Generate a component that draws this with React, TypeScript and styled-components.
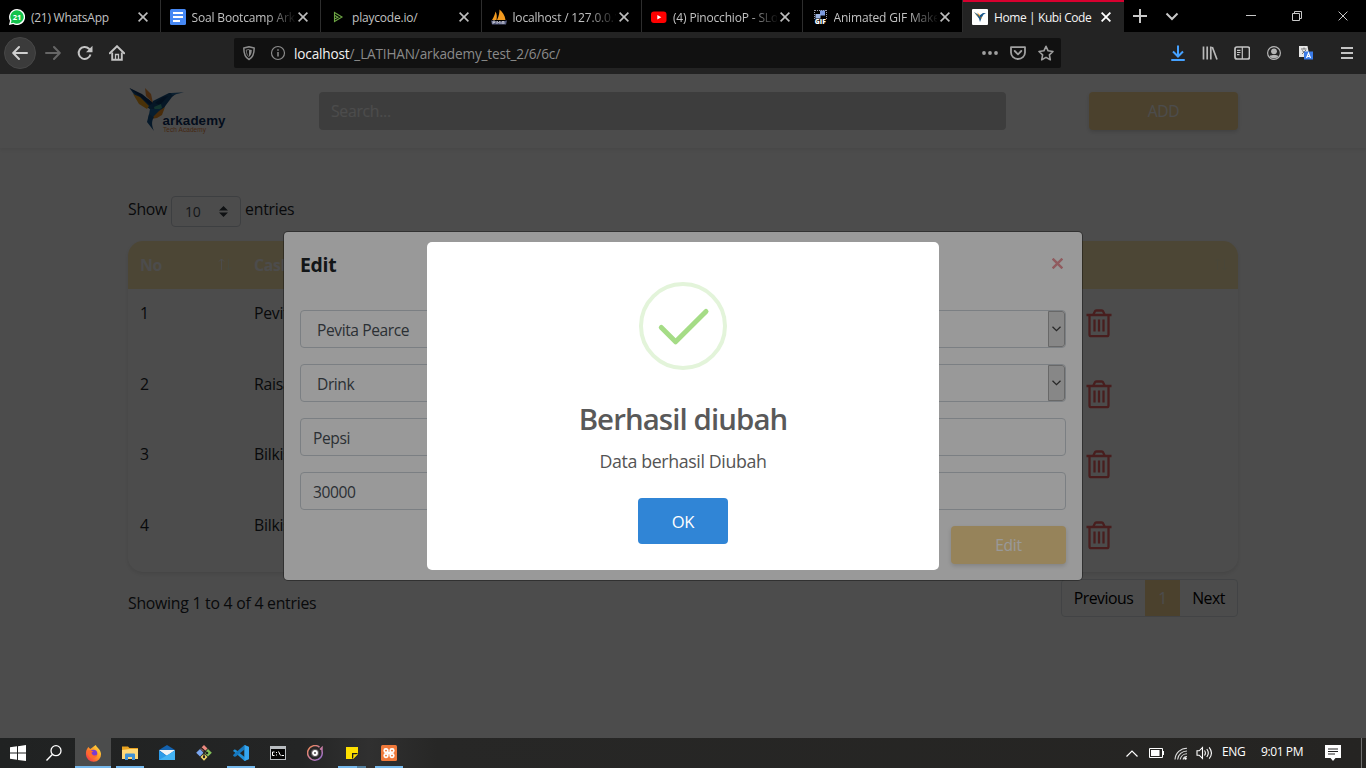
import React from 'react';
import styled, { createGlobalStyle } from 'styled-components';

const Global = createGlobalStyle`
  *, *::before, *::after { box-sizing: border-box; }
  html, body { margin: 0; padding: 0; overflow: hidden; background: #4c4c4c; }
  body { font-family: "Open Sans", "Noto Sans", sans-serif; color: #212529; }
  svg { display: block; flex: none; }
  button { font-family: inherit; margin: 0; padding: 0; border: 0; }
`;

const Desktop = styled.div`
  width: 1366px;
  height: 768px;
  display: flex;
  flex-direction: column;
  overflow: hidden;
`;

/* ---------- browser chrome ---------- */

const TabBar = styled.div`
  height: 32px;
  flex: none;
  display: flex;
  background: #000;
`;

const Tab = styled.div<{ $active?: boolean }>`
  width: 160.5px;
  height: 32px;
  flex: none;
  display: flex;
  align-items: center;
  padding: 2px ${p => (p.$active ? 13 : 12)}px 0 9px;
  background: ${p => (p.$active ? '#232323' : '#000')};
  color: ${p => (p.$active ? '#f5f5f5' : '#c2c2c2')};
  border-right: ${p => (p.$active ? '0' : '1px solid #2d2d2d')};
  box-shadow: ${p => (p.$active ? 'inset 0 2px 0 #d7002f' : 'none')};
`;

const TabTitle = styled.span<{ $fade?: boolean; $ls?: number }>`
  flex: 1;
  min-width: 0;
  margin: 0 3px 0 6px;
  padding-top: 2px;
  overflow: hidden;
  white-space: nowrap;
  font-size: 12px;
  line-height: 18px;
  letter-spacing: ${p => p.$ls ?? -0.2}px;
  ${p => p.$fade && 'mask-image: linear-gradient(to right, #000 72%, transparent 102%);'}
`;

const TabActions = styled.div`
  display: flex;
  align-items: center;
  gap: 16px;
  padding-left: 8px;
  flex: 1;
`;

const WindowControls = styled.div`
  display: flex;
  align-items: center;
`;

const WindowButton = styled.div`
  width: 46px;
  height: 32px;
  display: flex;
  align-items: center;
  justify-content: center;
`;

const NavBar = styled.div`
  height: 42px;
  flex: none;
  display: flex;
  align-items: center;
  background: #232323;
  padding: 0 13px 0 4px;
`;

const NavButtons = styled.div`
  display: flex;
  align-items: center;
  width: 230px;
`;

const NavButton = styled.div<{ $round?: boolean }>`
  width: 32px;
  height: 32px;
  margin-right: ${p => (p.$round ? '1px' : '0')};
  border-radius: 50%;
  display: flex;
  align-items: center;
  justify-content: center;
  background: ${p => (p.$round ? '#3b3b3b' : 'transparent')};
  border: ${p => (p.$round ? '1px solid #474747' : '0')};
`;

const UrlBar = styled.div`
  width: 827px;
  height: 30px;
  display: flex;
  align-items: center;
  padding: 0 7px 0 7px;
  background: #111;
  border-radius: 2px;
`;

const UrlText = styled.div`
  flex: 1;
  margin-left: 8px;
  padding-top: 2px;
  font-size: 13.6px;
  letter-spacing: -0.16px;
  line-height: 20px;
  color: #8a8a8a;
  white-space: nowrap;
  b { font-weight: 400; color: #f2f2f2; }
`;

const UrlIcons = styled.div<{ $gap?: number }>`
  display: flex;
  gap: ${p => p.$gap ?? 12}px;
`;

const Tools = styled.div`
  flex: 1;
  display: flex;
  align-items: center;
  justify-content: flex-end;
  gap: 16px;
`;

const MenuIcon = styled.div`
  margin-left: 11px;
`;

/* ---------- page ---------- */

const Viewport = styled.div`
  flex: 1;
  min-height: 0;
  position: relative;
  overflow: hidden;
  background: #fff;
`;

const Backdrop = styled.div<{ $dim: number }>`
  position: absolute;
  inset: 0;
  display: flex;
  align-items: center;
  justify-content: center;
  background: rgba(0, 0, 0, ${p => p.$dim});
`;

const Header = styled.header`
  height: 74px;
  display: flex;
  align-items: center;
  padding: 0 128px;
  background: #fff;
  box-shadow: 0 2px 4px rgba(0, 0, 0, 0.075);
`;

const Brand = styled.div`
  width: 191px;
  margin-top: -2px;
`;

const SearchInput = styled.div`
  width: 687px;
  height: 38px;
  padding: 0 12px;
  border-radius: 4px;
  background: #cecece;
  color: #fff;
  font-size: 15.8px;
  letter-spacing: -0.3px;
  line-height: 38px;
`;

const PrimaryButton = styled.button<{ $w: number }>`
  width: ${p => p.$w}px;
  height: 38px;
  border-radius: 4px;
  background: #fbda97;
  color: #fff;
  font-size: 15.6px;
  letter-spacing: -0.3px;
  line-height: 39px;
  box-shadow: 0 2px 4px rgba(0, 0, 0, 0.15);
`;

const HeaderAction = styled.div`
  margin-left: auto;
`;

const Content = styled.main`
  padding: 48px 128px 0;
  font-size: 15.8px;
  letter-spacing: -0.25px;
`;

const LengthRow = styled.div`
  height: 31px;
  display: flex;
  align-items: center;
  gap: 4px;
  line-height: 24px;
  span { margin-top: -5px; }
`;

const LengthSelect = styled.div`
  width: 70px;
  height: 31px;
  display: flex;
  align-items: center;
  justify-content: space-between;
  padding: 0 12px 0 13px;
  border: 1px solid #ced4da;
  border-radius: 4px;
  font-size: 14px;
  color: #495057;
`;

const Table = styled.div`
  height: 331px;
  margin: 14px 0 7px;
  border-radius: 15px;
  overflow: hidden;
  box-shadow: 0 2px 4px rgba(0, 0, 0, 0.1);
`;

const TableRow = styled.div`
  height: 70.5px;
  display: grid;
  grid-template-columns: 114px 1fr 164px;
`;

const TableHead = styled(TableRow)`
  height: 48px;
  background: #feeab2;
  color: #fff;
  font-weight: 700;
`;

const Cell = styled.div<{ $end?: boolean }>`
  display: flex;
  align-items: flex-start;
  justify-content: ${p => (p.$end ? 'flex-end' : 'space-between')};
  padding: 12px 10px 12px 12px;
  line-height: 24px;
`;

const TrashCell = styled.div`
  padding: 20px 0 0 12px;
`;

const SortMark = styled.svg`
  margin-top: 5px;
`;

const TableFooter = styled.div`
  display: flex;
  justify-content: space-between;
  align-items: flex-start;
`;

const Info = styled.div`
  padding-top: 12px;
  line-height: 24px;
`;

const Pagination = styled.div`
  display: flex;
  height: 38px;
  border: 1px solid #dee2e6;
  border-radius: 4px;
  overflow: hidden;
  color: #000;
`;

const PageItem = styled.div<{ $w: number; $active?: boolean }>`
  width: ${p => p.$w}px;
  margin: -1px 0;
  line-height: 38px;
  text-align: center;
  letter-spacing: -0.5px;
  background: ${p => (p.$active ? '#fbda97' : 'transparent')};
  color: ${p => (p.$active ? '#fff' : 'inherit')};
`;

/* ---------- edit dialog ---------- */

const EditDialog = styled.div`
  width: 798px;
  height: 348px;
  padding: 16px;
  display: flex;
  flex-direction: column;
  background: #fff;
  border-radius: 4px;
  box-shadow: 0 0 0 1px rgba(0, 0, 0, 0.35);
`;

const DialogHead = styled.div`
  height: 62px;
  display: flex;
  justify-content: space-between;
  padding: 2px 3px 0 0;
`;

const DialogTitle = styled.h5`
  margin: 0;
  font-size: 19.4px;
  font-weight: 700;
  line-height: 30px;
  letter-spacing: -0.3px;
`;

const DialogClose = styled.div`
  padding-top: 8px;
`;

const Field = styled.div<{ $inset?: boolean }>`
  height: 38px;
  flex: none;
  margin-bottom: 16px;
  display: flex;
  align-items: center;
  justify-content: space-between;
  padding-left: ${p => (p.$inset ? 16 : 12)}px;
  border: 1px solid #ced4da;
  border-radius: 4px;
  overflow: hidden;
  color: #495057;
  font-size: 15.6px;
  letter-spacing: -0.42px;
  line-height: 24px;
  span { padding-top: 1px; }
`;

const Dropper = styled.div`
  width: 17px;
  height: 36px;
  display: flex;
  align-items: center;
  justify-content: center;
  background: #e1e1e1;
  border: 1px solid #adadad;
  border-radius: 0 3px 3px 0;
`;

const DialogFoot = styled.div`
  display: flex;
  justify-content: flex-end;
`;

/* ---------- success alert ---------- */

const Alert = styled.div`
  width: 512px;
  height: 328px;
  padding-top: 40px;
  display: flex;
  flex-direction: column;
  align-items: center;
  background: #fff;
  border-radius: 5px;
`;

const AlertTitle = styled.h2`
  margin: 28px 0 0;
  font-size: 29.4px;
  font-weight: 600;
  line-height: 42px;
  letter-spacing: -0.9px;
  color: #595959;
`;

const AlertText = styled.div`
  margin-top: 8px;
  font-size: 17.8px;
  line-height: 26px;
  letter-spacing: -0.38px;
  color: #545454;
`;

const AlertButton = styled.button`
  width: 90px;
  height: 46px;
  margin-top: 24px;
  border-radius: 4px;
  background: #3085d6;
  color: #fff;
  font-size: 16.6px;
  letter-spacing: -0.3px;
  line-height: 48px;
`;

/* ---------- taskbar ---------- */

const Taskbar = styled.div`
  height: 30px;
  flex: none;
  display: flex;
  justify-content: space-between;
  background: linear-gradient(90deg, #202222 0, #242525 22%, #303030 27%, #272726 32%, #252422 100%);
`;

const TaskGroup = styled.div`
  display: flex;
`;

const Task = styled.div<{ $mark?: 'wide' | 'normal' | 'double'; $gap?: number }>`
  width: 36px;
  height: 30px;
  margin-right: ${p => p.$gap ?? 1}px;
  display: flex;
  align-items: center;
  justify-content: center;
  background: ${p =>
    p.$mark === 'wide'
      ? 'linear-gradient(#76b9ed, #76b9ed) 0 100% / 100% 2px no-repeat, #4b4c4c'
      : p.$mark === 'normal'
      ? 'linear-gradient(#76b9ed, #76b9ed) 50% 100% / 28px 2px no-repeat'
      : p.$mark === 'double'
      ? 'linear-gradient(90deg, #76b9ed 19px, #54809f 19px) 50% 100% / 28px 2px no-repeat'
      : 'transparent'};
`;

const Tray = styled.div`
  display: flex;
  align-items: center;
  color: #fff;
`;

const TrayItem = styled.div<{ $ml: number }>`
  margin-left: ${p => p.$ml}px;
`;

const TrayText = styled.span<{ $w: number; $ml: number }>`
  width: ${p => p.$w}px;
  margin: -2px 0 0 ${p => p.$ml}px;
  white-space: nowrap;
  font-size: 12px;
  line-height: 18px;
  letter-spacing: -0.4px;
`;

const ShowDesktop = styled.div`
  width: 5px;
  height: 30px;
  margin-left: 20px;
  border-left: 1px solid #6f6f6f;
`;

/* ---------- drawings ---------- */

const Cross = ({ s = 10, c = '#bdbdbd', w = 1.6 }: { s?: number; c?: string; w?: number }) => (
  <svg width={s} height={s} viewBox="0 0 10 10" stroke={c} strokeWidth={w} fill="none">
    <path d="M.6 .6 9.4 9.4M9.4 .6 .6 9.4" />
  </svg>
);

const Sixteen = ({ children, size = 16 }: { children: React.ReactNode; size?: number }) => (
  <svg width={size} height={size} viewBox="0 0 16 16" fill="none">
    {children}
  </svg>
);

const WhatsAppIcon = () => (
  <Sixteen>
    <path d="M8 0a8 8 0 1 1-3.800 15L0 16l1-4.200A8 8 0 0 1 8 0Z" fill="#fff" />
    <path d="M8 1.300a6.700 6.700 0 1 1-3.500 12.400L1.800 14.300l.7-2.600A6.700 6.700 0 0 1 8 1.300Z" fill="#12c24b" />
    <text x="8" y="10.700" textAnchor="middle" fontSize="7.500" fontWeight="700" fill="#fff" fontFamily="Open Sans, sans-serif">21</text>
  </Sixteen>
);

const DocsIcon = () => (
  <Sixteen>
    <rect width="16" height="16" rx="1.500" fill="#4688f4" />
    <path d="M3 4h10M3 8h10M3 12h7" stroke="#fff" strokeWidth="2" />
  </Sixteen>
);

const PlayIcon = () => (
  <Sixteen>
    <path d="M4.500 3.500v9l7.500-4.500zM4.500 6.200 8 8.300 4.500 10" stroke="#6da544" strokeWidth="1.100" />
  </Sixteen>
);

const PmaIcon = () => (
  <Sixteen>
    <path d="M1 11C3 8 4 5 4.500 2.500 6 5 6 8 5.500 11ZM6 11C8 7 8.500 3 8.500.500c3 2.500 5.500 6 6 10.500Z" fill="#f29a1f" />
    <path d="M0 11.500c5 1.500 11 1.500 16 0l-1 4H1z" fill="#565c80" />
    <path d="M2 15v-3h2v1.500H2M6 15v-3l1.500 2L9 12v3M11 15v-2.500h2V15M11 14h2" stroke="#c9cad6" strokeWidth=".8" />
  </Sixteen>
);

const YouTubeIcon = () => (
  <Sixteen>
    <rect x="0" y="2.500" width="15.500" height="11.500" rx="3" fill="#f00" />
    <path d="M6.300 6v4.500l4-2.200z" fill="#fff" />
  </Sixteen>
);

const GifIcon = () => (
  <Sixteen>
    <path d="M3 1.500h11M2.500 1v9M14.500 1v9" stroke="#99a" strokeDasharray="1 1" />
    <rect x="8" y="1.500" width="5" height="5" fill="#7d9be0" />
    <rect x="3.500" y="5" width="5" height="4.500" fill="#9db4e2" />
    <text x="8.300" y="15.200" textAnchor="middle" fontSize="6.800" fontWeight="800" fill="#fff" fontFamily="Open Sans, sans-serif">GIF</text>
  </Sixteen>
);

const KubiIcon = () => (
  <Sixteen>
    <rect width="16" height="16" rx="1" fill="#fff" />
    <path d="M2 3l5.500 3.500L11 4l3 .2-2.500 1.300L9.500 9 8 13l-1-3.500z" fill="#17568a" />
    <path d="M5 3.200 8 6l-.5 2z M8.500 8.500l1.500-1-1 2.500z" fill="#f3961e" />
    <path d="m2 3 4.500 5L5 7z" fill="#e8a935" />
  </Sixteen>
);

const BackIcon = ({ c, flip }: { c: string; flip?: boolean }) => (
  <svg width="16" height="16" viewBox="0 0 16 16" fill="none" stroke={c} strokeWidth="2" strokeLinecap="round" strokeLinejoin="round" transform={flip ? 'scale(-1 1)' : undefined}>
    <path d="M15 8H1.500M7 2 1.200 8 7 14" />
  </svg>
);

const ReloadIcon = () => (
  <Sixteen>
    <path d="M13.500 9.500A6 6 0 1 1 12 3.700L13.500 5" stroke="#c4c4c4" strokeWidth="2" />
    <path d="M15.500.800V7.200H9z" fill="#c4c4c4" />
  </Sixteen>
);

const HomeIcon = () => (
  <Sixteen>
    <path d="M.8 8.300 8 1.200l7.200 7.100" stroke="#c4c4c4" strokeWidth="1.900" strokeLinecap="round" />
    <path d="M3.200 7.500v7.300h9.600V7.500" stroke="#c4c4c4" strokeWidth="1.900" />
    <path d="M6.500 15V9.500h3V15" stroke="#c4c4c4" strokeWidth="1.300" />
  </Sixteen>
);

const ShieldIcon = () => (
  <Sixteen>
    <path d="M8 1.800 13.200 3c0 6-1.200 9.500-5.200 11.500C4 12.500 2.800 9 2.800 3z" stroke="#8c8c8c" strokeWidth="1.500" strokeLinejoin="round" />
    <path d="M8 4.500v7.300c2-1.500 2.700-3.300 2.800-6.700z" fill="#8c8c8c" />
    <path d="M8 4.500 5.300 5c.1 3.400.8 5.200 2.700 6.800" stroke="#8c8c8c" strokeWidth=".8" />
  </Sixteen>
);

const InfoIcon = () => (
  <Sixteen>
    <circle cx="8" cy="8" r="6.500" stroke="#8c8c8c" strokeWidth="1.200" />
    <path d="M8 7v4.500M8 4.300v1.500" stroke="#8c8c8c" strokeWidth="1.500" />
  </Sixteen>
);

const DotsIcon = () => (
  <Sixteen>
    <g fill="#a0a0a0">
      <circle cx="2" cy="8" r="1.900" />
      <circle cx="8" cy="8" r="1.900" />
      <circle cx="14" cy="8" r="1.900" />
    </g>
  </Sixteen>
);

const PocketIcon = () => (
  <Sixteen>
    <path d="M1 2.200h14V7.500a7 6.500 0 0 1-14 0z" stroke="#a0a0a0" strokeWidth="1.800" strokeLinejoin="round" />
    <path d="M4.700 6 8 9.300 11.300 6" stroke="#a0a0a0" strokeWidth="1.800" strokeLinecap="round" strokeLinejoin="round" />
  </Sixteen>
);

const StarIcon = () => (
  <Sixteen>
    <path d="m8 1.300 2.100 4.500 4.900.7-3.600 3.400.9 4.900L8 12.400l-4.300 2.400.9-4.900L1 6.500l4.900-.7z" stroke="#a0a0a0" strokeWidth="1.600" strokeLinejoin="round" />
  </Sixteen>
);

const DownloadIcon = () => (
  <Sixteen>
    <path d="M8 .5v10.500M3 6.500l5 5 5-5" stroke="#45a1ff" strokeWidth="2" />
    <path d="M2 15h12" stroke="#45a1ff" strokeWidth="2" strokeLinecap="round" />
  </Sixteen>
);

const LibraryIcon = () => (
  <Sixteen>
    <path d="M1.500 1.500v13M5.200 1.500v13M8.800 1.500v13M10.300 2l4.700 12.500" stroke="#b8b8b8" strokeWidth="1.700" />
  </Sixteen>
);

const SidebarIcon = () => (
  <Sixteen>
    <rect x="1" y="2" width="14.500" height="12" rx="2" stroke="#c4c4c4" strokeWidth="1.700" />
    <path d="M8.300 2v12M3 5.300h3.500M3 7.500h3.500M3 9.700h2.500" stroke="#c4c4c4" strokeWidth="1.200" />
  </Sixteen>
);

const AccountIcon = () => (
  <Sixteen>
    <circle cx="8" cy="8" r="6.400" stroke="#b4b4b4" strokeWidth="1.200" />
    <circle cx="8" cy="6.300" r="2.900" fill="#b4b4b4" />
    <path d="M3.500 11c1-1.500 8-1.500 9 0-1.500 3-7.500 3-9 0Z" fill="#b4b4b4" />
  </Sixteen>
);

const TranslateIcon = () => (
  <Sixteen>
    <path d="M1 1h8.500l2 11H1z" fill="#e6e6e6" />
    <path d="M3 4h5.500M6 2.500V4M4 5.500l4 3M8 5l-4 4" stroke="#666" strokeWidth=".9" />
    <rect x="6" y="6.500" width="9" height="8" fill="#3a7be8" />
    <path d="m8.500 13 2-5 2 5M9.200 11.500h2.700" stroke="#fff" strokeWidth="1.100" />
  </Sixteen>
);

const HamburgerIcon = () => (
  <svg width="12" height="12" viewBox="0 0 12 12" stroke="#c4c4c4" strokeWidth="2">
    <path d="M0 1h12M0 6h12M0 11h12" />
  </svg>
);

const ArkademyLogo = () => (
  <svg width="100" height="48" viewBox="0 0 100 48">
    <path d="M1.500 2 10 14l13 10 5-6z" fill="#145089" />
    <path d="M1.500 2 14 8l11 9-3 2z" fill="#0d3566" />
    <path d="M5 8 12 11l9 9-2 3-8-5z" fill="#f5a61d" />
    <path d="m17 2 6 6 2 9-7-7z" fill="#f0913a" />
    <path d="m25 15 8-4 8-4 8 0-5 4-6 8-4 6-11 5z" fill="#154e80" />
    <path d="m27 17 8-6 5-1-8 9z" fill="#0c3765" />
    <path d="m26 21 7-3 1 4-7 3z" fill="#3fae9b" />
    <path d="m43 7 13-.8-12 3z" fill="#2d6fa5" />
    <path d="m22 23 12 0-8 8-6 3z" fill="#1b66a3" />
    <path d="m37 21-3 8-5 3-6 1 8-8z" fill="#f39322" />
    <path d="m21 28-2 8 7 9c-2-5-3-9 0-14z" fill="#15568e" />
    <text x="34.500" y="38.500" fontFamily="Liberation Sans, sans-serif" fontSize="13.300" fontWeight="700" textLength="63" fill="#0c3063">arkademy</text>
    <text x="35" y="46" fontFamily="Liberation Sans, sans-serif" fontSize="6.500" textLength="43" fill="#e8833a">Tech Academy</text>
  </svg>
);

const SortIcon = ({ up, down }: { up: string; down: string }) => (
  <SortMark width="14" height="13" viewBox="0 0 14 13" fill="none">
    <path d="M3.500 12V1M1 3.500 3.500 1 6 3.500" stroke={up} />
    <path d="M10.500 1v11M8 9.500l2.500 2.500L13 9.500" stroke={down} />
  </SortMark>
);

const TrashIcon = () => (
  <svg width="26" height="29" viewBox="0 0 26 29" fill="none" stroke="#f06464" strokeWidth="2.300" strokeLinejoin="round">
    <path d="M.5 6h25" />
    <path d="M7.500 5.500 8.800 2.500q.4-1 1.500-1h5.400q1.100 0 1.500 1L18.500 5.500" />
    <path d="M3.500 6v19.500q0 1.700 1.700 1.700h15.600q1.700 0 1.700-1.700V6" />
    <path d="M8.500 10.500v12M13 10.500v12M17.500 10.500v12" />
  </svg>
);

const SelectArrows = () => (
  <svg width="9" height="11" viewBox="0 0 9 11" fill="#343a40">
    <path d="M4.500 0 9 4.400H0zM4.500 11 0 6.400h9z" />
  </svg>
);

const SmallChevron = () => (
  <svg width="9" height="6" viewBox="0 0 9 6" fill="none" stroke="#444" strokeWidth="1.300">
    <path d="m.5.700 4 4 4-4" />
  </svg>
);

const SuccessIcon = () => (
  <svg width="88" height="88" viewBox="0 0 88 88" fill="none">
    <circle cx="44" cy="44" r="42" stroke="#e3f4da" strokeWidth="4" />
    <path d="M22.300 45.500 36.600 59.800 67 29.500" stroke="#a5dc86" strokeWidth="5" strokeLinecap="round" strokeLinejoin="round" />
  </svg>
);

const StartIcon = () => (
  <Sixteen>
    <path d="M0 2.300 7 1.300V7.600H0zM8 1.200 16 0v7.600H8zM0 8.500h7v6.300L0 13.800zM8 8.500h8V16l-8-1.100z" fill="#fff" />
  </Sixteen>
);

const SearchIcon = () => (
  <Sixteen>
    <circle cx="10" cy="5.700" r="5" stroke="#fff" strokeWidth="1.300" />
    <path d="M6.300 9.500.500 15.500" stroke="#fff" strokeWidth="1.400" />
  </Sixteen>
);

const FirefoxIcon = () => (
  <svg width="17" height="17" viewBox="0 0 18 18">
    <defs>
      <linearGradient id="fox" x1="1" y1="0" x2="0" y2="1">
        <stop offset="0" stopColor="#fff04a" />
        <stop offset=".45" stopColor="#ff9a26" />
        <stop offset="1" stopColor="#f2204f" />
      </linearGradient>
    </defs>
    <path d="M2 4.500 3.500 2l2 2.200C8 3 9 1.500 11.500 0c.5 2.500 5 4 5.500 9.500A8 8 0 0 1 1 10C1 7.500 1.200 6 2 4.500Z" fill="url(#fox)" />
    <circle cx="9" cy="9" r="4" fill="#7b3bd0" />
    <path d="M2.500 6c3-1 4 .5 6.500.5L7 8c0 3 3 4 6 2-1 5-8 5-10 0z" fill="#ff6b2b" />
  </svg>
);

const FolderIcon = () => (
  <Sixteen>
    <path d="M0 1.500h6l1.500 1.500H16v11H0z" fill="#e9a320" />
    <path d="M0 5 8 4h8v10H0z" fill="#ffd978" />
    <path d="M3 15V9.500q0-1 1-1h8q1 0 1 1V15h-3v-3H6v3z" fill="#3f92d6" />
  </Sixteen>
);

const MailIcon = () => (
  <Sixteen>
    <path d="M0 5 8 0l8 5v10H0z" fill="#1462ae" />
    <path d="M0 5h16L8 11z" fill="#f2f4f6" />
    <path d="M0 5.500 8 11l8-5.500V15H0z" fill="#2c9be8" />
    <path d="M0 15 16 5.500V15z" fill="#43b3f4" />
  </Sixteen>
);

const GitIcon = () => (
  <Sixteen>
    <path d="m8 0 3.500 3.500L8 7 4.500 3.500z" fill="#ee8a80" />
    <path d="M4 4 7.500 7.700 4 11.500.2 7.700z" fill="#7ba7f0" />
    <path d="m12 4 3.800 3.800L12 11.500 8.500 7.700z" fill="#83c15a" />
    <path d="m8 8.500 3.500 3.500L8 15.800 4.500 12z" fill="#f3d66b" />
    <path d="m5 2.500 6.500 6M8 6v6" stroke="#222" strokeWidth="1.200" />
    <circle cx="11" cy="8" r="1.300" fill="#222" />
    <circle cx="8" cy="12" r="1.200" fill="#222" />
  </Sixteen>
);

const CodeIcon = () => (
  <Sixteen>
    <path d="M11.500 0 16 2v12l-4.500 2-9.800-8.800L0 6l1.200-1.500 1.500.2L11.500 12V4z" fill="#1f8fd6" />
    <path d="m0 10.500 1.300 1.200 1.500-.2L11.500 4.500V0L1 9z" fill="#1677bd" />
    <path d="M11.500 0 16 2v12l-4.500 2z" fill="#35a5ef" />
  </Sixteen>
);

const CmdIcon = () => (
  <svg width="16" height="14" viewBox="0 0 16 14">
    <path d="M0 0h16v14H0z" fill="#b8bcc0" />
    <path d="M1 3h14v10H1z" fill="#050505" />
    <path d="M4.500 6H2.500v3.500h2M6.500 6v1M6.500 8.500v1M8.500 5.500l2 4M11.500 9.500h2.500" stroke="#fff" fill="none" />
  </svg>
);

const GrooveIcon = () => (
  <Sixteen>
    <defs>
      <linearGradient id="groove" x1="0" y1="0" x2="1" y2="1">
        <stop offset="0" stopColor="#f28a50" />
        <stop offset=".5" stopColor="#cc7d9c" />
        <stop offset="1" stopColor="#8a6ad0" />
      </linearGradient>
    </defs>
    <path d="M12.500 2.200A7.300 7.300 0 1 0 15 6V2.500L13 4.500" stroke="url(#groove)" strokeWidth="1.500" />
    <circle cx="8" cy="8" r="4" fill="#63595e" />
    <circle cx="8" cy="8" r="2" stroke="#fff" strokeWidth="1.800" />
  </Sixteen>
);

const NotesIcon = () => (
  <svg width="12" height="12" viewBox="0 0 12 12">
    <path d="M0 0h12v7L7 12H0z" fill="#ffe000" />
    <path d="M6 6h6L6 12z" fill="#1c1c1c" />
    <path d="M7.300 11.700V7.300h4.400z" fill="#ffe000" />
  </svg>
);

const XamppIcon = () => (
  <Sixteen>
    <rect width="16" height="16" rx="1.500" fill="#f0793a" />
    <g stroke="#fff" strokeWidth="1.700">
      <rect x="3.200" y="3.800" width="3.600" height="3.600" rx="1.600" />
      <rect x="9.200" y="3.800" width="3.600" height="3.600" rx="1.600" />
      <rect x="3.200" y="8.800" width="3.600" height="3.600" rx="1.600" />
      <rect x="9.200" y="8.800" width="3.600" height="3.600" rx="1.600" />
      <path d="M6 6.500 10 9.700M10 6.500 6 9.700" />
    </g>
  </Sixteen>
);

const TrayChevron = () => (
  <svg width="12" height="7" viewBox="0 0 12 7" fill="none" stroke="#fff" strokeWidth="1.200">
    <path d="m.5 6.500 5.500-5.500 5.500 5.500" />
  </svg>
);

const BatteryIcon = () => (
  <svg width="15" height="10" viewBox="0 0 15 10">
    <path d="M.5.5h13v9H.5z" fill="none" stroke="#fff" />
    <path d="M2 2h8.500v6H2zM13.500 3H15v4h-1.500z" fill="#fff" />
  </svg>
);

const WifiIcon = () => (
  <svg width="14" height="14" viewBox="0 0 14 14" fill="none" stroke="#ddd" strokeWidth="1.100">
    <path d="M1 13.500A12 12 0 0 1 13 2.200M3.600 13.500A9.400 9.400 0 0 1 13 5M6.200 13.500A7 7 0 0 1 13 7.800" />
    <path d="M9 13.500a4 4 0 0 1 4-3" />
    <circle cx="11.500" cy="12.500" r="1.200" fill="#fff" stroke="none" />
  </svg>
);

const VolumeIcon = () => (
  <svg width="17" height="14" viewBox="0 0 17 14" fill="none" stroke="#fff" strokeWidth="1.100">
    <path d="M1 4.800h2.200L6.500 1.500v11L3.200 9.200H1z" />
    <path d="M8.500 4.500q1.800 2.500 0 5M10.800 3q3 4 0 8M13.200 1.300q4.500 5.700 0 11.400" />
  </svg>
);

const NoticeIcon = () => (
  <svg width="16" height="16" viewBox="0 0 16 16">
    <path d="M0 0h16v13h-5.500L8 16l-2.500-3H0z" fill="#fff" />
    <path d="M3 4h10M3 6.500h10M3 9h7" stroke="#222" strokeWidth="1.200" />
  </svg>
);

/* ---------- data ---------- */

const tabs = [
  { title: '(21) WhatsApp', icon: <WhatsAppIcon />, ls: -0.27 },
  { title: 'Soal Bootcamp Arkademy', icon: <DocsIcon />, ls: -0.15, fade: true },
  { title: 'playcode.io/', icon: <PlayIcon />, ls: -0.2 },
  { title: 'localhost / 127.0.0.1', icon: <PmaIcon />, ls: -0.17, fade: true },
  { title: '(4) PinocchioP - SLoWMoTIoN', icon: <YouTubeIcon />, ls: -0.17, fade: true },
  { title: 'Animated GIF Maker', icon: <GifIcon />, ls: -0.17, fade: true },
  { title: 'Home | Kubi Code', icon: <KubiIcon />, ls: -0.4, active: true },
];

const rows = ['Pevita Pearce', 'Raisa Andriana', 'Bilkis Ismail', 'Bilkis Ismail'];

const fields = [
  { value: 'Pevita Pearce', select: true },
  { value: 'Drink', select: true },
  { value: 'Pepsi' },
  { value: '30000' },
];

export default function App() {
  return (
    <Desktop>
      <Global />
      <TabBar>
        {tabs.map(t => (
          <Tab key={t.title} $active={t.active}>
            {t.icon}
            <TabTitle $ls={t.ls} $fade={t.fade}>{t.title}</TabTitle>
            <Cross c={t.active ? '#fff' : '#bdbdbd'} w={t.active ? 1.8 : 1.6} />
          </Tab>
        ))}
        <TabActions>
          <svg width="16" height="16" viewBox="0 0 16 16" stroke="#c8c8c8" strokeWidth="2"><path d="M8 1v14M1 8h14" /></svg>
          <svg width="16" height="16" viewBox="0 0 16 16" stroke="#c8c8c8" strokeWidth="2" fill="none"><path d="m2.500 5.500 5.500 5.500 5.500-5.500" /></svg>
        </TabActions>
        <WindowControls>
          <WindowButton><svg width="10" height="10" stroke="#c8c8c8"><path d="M0 4.500h10" /></svg></WindowButton>
          <WindowButton>
            <svg width="10" height="10" stroke="#c8c8c8" fill="none"><path d="M.5 2.500h7v7h-7zM2.500 2.500v-2h7v7h-2" /></svg>
          </WindowButton>
          <WindowButton><Cross w={1} c="#c8c8c8" /></WindowButton>
        </WindowControls>
      </TabBar>
      <NavBar>
        <NavButtons>
          <NavButton $round><BackIcon c="#cfcfcf" /></NavButton>
          <NavButton><BackIcon c="#666" flip /></NavButton>
          <NavButton><ReloadIcon /></NavButton>
          <NavButton><HomeIcon /></NavButton>
        </NavButtons>
        <UrlBar>
          <UrlIcons $gap={13}><ShieldIcon /><InfoIcon /></UrlIcons>
          <UrlText><b>localhost</b>/_LATIHAN/arkademy_test_2/6/6c/</UrlText>
          <UrlIcons><DotsIcon /><PocketIcon /><StarIcon /></UrlIcons>
        </UrlBar>
        <Tools>
          <DownloadIcon /><LibraryIcon /><SidebarIcon /><AccountIcon /><TranslateIcon />
          <MenuIcon><HamburgerIcon /></MenuIcon>
        </Tools>
      </NavBar>

      <Viewport>
        <Header>
          <Brand><ArkademyLogo /></Brand>
          <SearchInput>Search...</SearchInput>
          <HeaderAction><PrimaryButton $w={149}>ADD</PrimaryButton></HeaderAction>
        </Header>
        <Content>
          <LengthRow>
            <span>Show</span>
            <LengthSelect>10<SelectArrows /></LengthSelect>
            <span>entries</span>
          </LengthRow>
          <Table>
            <TableHead>
              <Cell>No<SortIcon up="#ffffff" down="#eff2cf" /></Cell>
              <Cell>Cashier</Cell>
              <Cell $end><SortIcon up="#f4eabc" down="#f4eabc" /></Cell>
            </TableHead>
            {rows.map((name, i) => (
              <TableRow key={i}>
                <Cell>{i + 1}</Cell>
                <Cell>{name}</Cell>
                <TrashCell><TrashIcon /></TrashCell>
              </TableRow>
            ))}
          </Table>
          <TableFooter>
            <Info>Showing 1 to 4 of 4 entries</Info>
            <Pagination>
              <PageItem $w={83}>Previous</PageItem>
              <PageItem $w={35} $active>1</PageItem>
              <PageItem $w={57}>Next</PageItem>
            </Pagination>
          </TableFooter>
        </Content>

        <Backdrop $dim={0.5}>
          <EditDialog>
            <DialogHead>
              <DialogTitle>Edit</DialogTitle>
              <DialogClose><Cross s={11} c="#f0989e" w={2.2} /></DialogClose>
            </DialogHead>
            {fields.map(f => (
              <Field key={f.value} $inset={f.select}>
                <span>{f.value}</span>
                {f.select && <Dropper><SmallChevron /></Dropper>}
              </Field>
            ))}
            <DialogFoot><PrimaryButton $w={115}>Edit</PrimaryButton></DialogFoot>
          </EditDialog>
        </Backdrop>

        <Backdrop $dim={0.4}>
          <Alert>
            <SuccessIcon />
            <AlertTitle>Berhasil diubah</AlertTitle>
            <AlertText>Data berhasil Diubah</AlertText>
            <AlertButton>OK</AlertButton>
          </Alert>
        </Backdrop>
      </Viewport>

      <Taskbar>
        <TaskGroup>
          <Task $gap={0}><StartIcon /></Task>
          <Task $gap={3}><SearchIcon /></Task>
          <Task $mark="wide"><FirefoxIcon /></Task>
          <Task $mark="normal"><FolderIcon /></Task>
          <Task><MailIcon /></Task>
          <Task><GitIcon /></Task>
          <Task $mark="normal"><CodeIcon /></Task>
          <Task><CmdIcon /></Task>
          <Task><GrooveIcon /></Task>
          <Task $mark="double"><NotesIcon /></Task>
          <Task $mark="normal"><XamppIcon /></Task>
        </TaskGroup>
        <Tray>
          <TrayItem $ml={0}><TrayChevron /></TrayItem>
          <TrayItem $ml={11}><BatteryIcon /></TrayItem>
          <TrayItem $ml={10}><WifiIcon /></TrayItem>
          <TrayItem $ml={8}><VolumeIcon /></TrayItem>
          <TrayText $w={24} $ml={9}>ENG</TrayText>
          <TrayText $w={43} $ml={15}>9:01 PM</TrayText>
          <TrayItem $ml={21}><NoticeIcon /></TrayItem>
          <ShowDesktop />
        </Tray>
      </Taskbar>
    </Desktop>
  );
}
